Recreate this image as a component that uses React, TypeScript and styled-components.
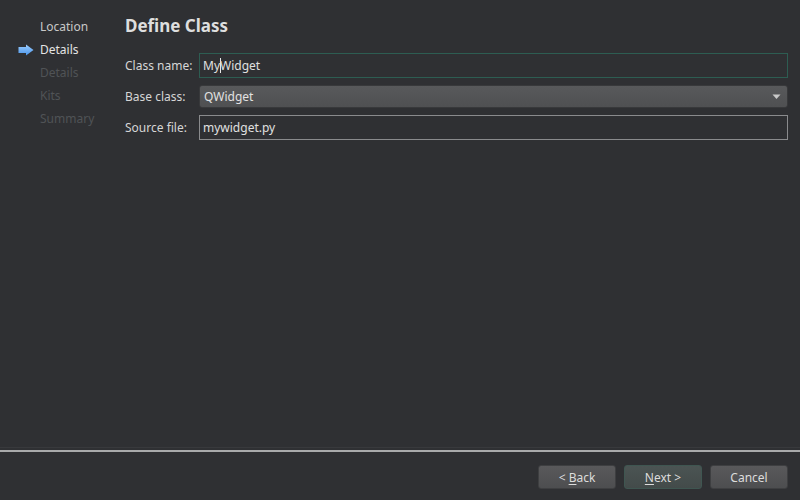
import React from "react";
import styled, { createGlobalStyle } from "styled-components";

const Global = createGlobalStyle`
  html, body { margin: 0; padding: 0; background: #2f3033; }
  body { font-family: "Noto Sans", "Open Sans", sans-serif; font-size: 12px; color: #dcdcdc; }
  * { box-sizing: border-box; }
`;

const Window = styled.div`
  width: 800px;
  height: 500px;
  background: #2f3033;
  display: flex;
  flex-direction: column;
`;

const Main = styled.div`
  flex: 1;
  display: flex;
`;

const Sidebar = styled.div`
  width: 125px;
  padding: 15px 0 0 18px;
  display: flex;
  flex-direction: column;
`;

const Step = styled.div<{ $state: "done" | "active" | "todo" }>`
  height: 23px;
  display: flex;
  align-items: center;
  color: ${(p) => (p.$state === "todo" ? "#505356" : p.$state === "active" ? "#e4e4e4" : "#c8c8c8")};
  font-size: 12px;
`;

const ArrowSlot = styled.div`
  width: 22px;
  display: flex;
  align-items: center;
`;

const Content = styled.div`
  flex: 1;
  padding: 13px 12px 0 0;
  display: flex;
  flex-direction: column;
`;

const Title = styled.div`
  font-size: 17px;
  font-weight: bold;
  color: #dedede;
  height: 26px;
  line-height: 26px;
  margin-bottom: 14px;
`;

const Form = styled.div`
  display: grid;
  grid-template-columns: 74px 1fr;
  row-gap: 6px;
  align-items: center;
`;

const Label = styled.div`
  color: #d6d6d6;
  font-size: 12px;
`;

const Field = styled.div<{ $focus?: boolean }>`
  height: 25px;
  border: 1px solid ${(p) => (p.$focus ? "#2d5d52" : "#8a8b8d")};
  background: #2f3033;
  padding: 0 3px;
  display: flex;
  align-items: center;
  color: #e0e0e0;
  font-size: 12px;
`;

const Caret = styled.span`
  display: inline-block;
  width: 1px;
  height: 15px;
  background: #e8e8e8;
  margin: 0 -0.5px;
`;

const Combo = styled.div`
  height: 23px;
  margin: 1px 0;
  border: 1px solid #38393b;
  border-radius: 3px;
  background: linear-gradient(#58595b, #4f5052);
  padding: 0 6px 0 4px;
  display: flex;
  align-items: center;
  justify-content: space-between;
  color: #e2e2e2;
  font-size: 12px;
`;

const Footer = styled.div`
  height: 53px;
  border-top: 1px solid #38393c;
  display: flex;
  flex-direction: column;
`;

const Rule = styled.div`
  height: 2px;
  margin-top: 2px;
  background: #a9aaab;
`;

const Buttons = styled.div`
  flex: 1;
  display: flex;
  justify-content: flex-end;
  align-items: flex-start;
  gap: 8px;
  padding: 13px 12px 0 0;
`;

const Button = styled.div<{ $default?: boolean }>`
  width: 78px;
  height: 24px;
  border-radius: 3px;
  border: 1px solid ${(p) => (p.$default ? "#3f5651" : "#3e3f41")};
  background: ${(p) =>
    p.$default ? "linear-gradient(#4b5453, #434b4a)" : "linear-gradient(#59595b, #4d4e50)"};
  display: flex;
  align-items: center;
  justify-content: center;
  color: #dcdcdc;
  font-size: 12px;
`;

const Caption = styled.span`
  white-space: pre;
`;

const U = styled.span`
  text-decoration: underline;
  text-underline-offset: 2px;
`;

const Arrow = () => (
  <svg width="16" height="12" viewBox="0 0 16 12">
    <defs>
      <linearGradient id="ag" x1="0" y1="0" x2="0" y2="1">
        <stop offset="0" stopColor="#9ccdff" />
        <stop offset="1" stopColor="#4a95ea" />
      </linearGradient>
    </defs>
    <path d="M0.5 3 H8 V0.5 L15.5 6 L8 11.5 V9 H0.5 Z" fill="url(#ag)" />
  </svg>
);

const Chevron = () => (
  <svg width="9" height="6" viewBox="0 0 9 6">
    <path d="M0.5 0.5 H8.5 L4.5 5 Z" fill="#c9c9c9" />
  </svg>
);

export default function App() {
  return (
    <>
      <Global />
      <Window>
        <Main>
          <Sidebar>
            <Step $state="done"><ArrowSlot />Location</Step>
            <Step $state="active"><ArrowSlot><Arrow /></ArrowSlot>Details</Step>
            <Step $state="todo"><ArrowSlot />Details</Step>
            <Step $state="todo"><ArrowSlot />Kits</Step>
            <Step $state="todo"><ArrowSlot />Summary</Step>
          </Sidebar>
          <Content>
            <Title>Define Class</Title>
            <Form>
              <Label>Class name:</Label>
              <Field $focus>My<Caret />Widget</Field>
              <Label>Base class:</Label>
              <Combo>QWidget<Chevron /></Combo>
              <Label>Source file:</Label>
              <Field>mywidget.py</Field>
            </Form>
          </Content>
        </Main>
        <Footer>
          <Rule />
          <Buttons>
            <Button><Caption>&lt; <U>B</U>ack</Caption></Button>
            <Button $default><Caption><U>N</U>ext &gt;</Caption></Button>
            <Button>Cancel</Button>
          </Buttons>
        </Footer>
      </Window>
    </>
  );
}
